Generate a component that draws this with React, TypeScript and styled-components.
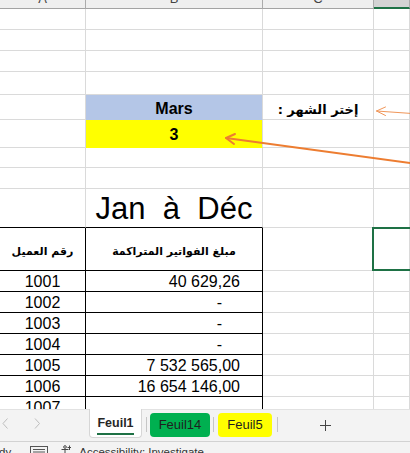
import React from 'react';
import styled, { createGlobalStyle } from 'styled-components';

const GRID = '#dadada';
const BLACK = '#000000';
const XL_GREEN = '#1e7145';
const ORANGE = '#ed7d31';

const GlobalStyle = createGlobalStyle`
  html, body { margin: 0; padding: 0; background: #ffffff; overflow: hidden; }
  body { font-family: "Liberation Sans", "DejaVu Sans", sans-serif; }
`;

const Window = styled.div`
  width: 410px;
  height: 453px;
  display: flex;
  flex-direction: column;
  overflow: hidden;
`;

const SheetArea = styled.div`
  position: relative;
  flex: none;
  height: 409px;
  overflow: hidden;
`;

const Grid = styled.div`
  display: grid;
  grid-template-columns: 86px 177px 111px 36px;
  grid-template-rows: 9px 21px 21px 21px 23px 25px 28px 20px 21px 39px 43px repeat(7, 21px);
`;

const HeaderCell = styled.div<{ $active?: boolean }>`
  box-sizing: border-box;
  display: flex;
  align-items: flex-end;
  justify-content: center;
  overflow: hidden;
  background: ${p => (p.$active ? '#d3d3d3' : '#efefef')};
  border-right: 1px solid #ababab;
  border-bottom: ${p => (p.$active ? `2px solid ${XL_GREEN}` : '1px solid #a3a3a3')};
`;

const ColumnLetter = styled.span`
  font-size: 13px;
  line-height: 13px;
  color: #444;
  margin-bottom: 3px;
`;

type Align = 'left' | 'center' | 'right';

const Cell = styled.div<{
  $fill?: string;
  $right?: string;
  $bottom?: string;
  $align?: Align;
  $pr?: number;
  $pb?: number;
  $pt?: number;
  $rtl?: boolean;
  $middle?: boolean;
}>`
  box-sizing: border-box;
  display: flex;
  align-items: ${p => (p.$middle ? 'center' : 'flex-end')};
  justify-content: ${p =>
    p.$align === 'right' ? 'flex-end' : p.$align === 'left' ? 'flex-start' : 'center'};
  background: ${p => p.$fill ?? '#ffffff'};
  border-right: 1px solid ${p => p.$right ?? GRID};
  border-bottom: 1px solid ${p => p.$bottom ?? p.$fill ?? GRID};
  padding-top: ${p => p.$pt ?? 0}px;
  padding-right: ${p => p.$pr ?? 0}px;
  padding-bottom: ${p => p.$pb ?? 0}px;
  direction: ${p => (p.$rtl ? 'rtl' : 'ltr')};
  white-space: pre;
  overflow: hidden;
`;

const CellText = styled.span<{ $size: number; $bold?: boolean; $arabic?: boolean }>`
  font-family: ${p =>
    p.$arabic ? '"DejaVu Sans", sans-serif' : '"Liberation Sans", Arial, sans-serif'};
  font-size: ${p => p.$size}px;
  font-weight: ${p => (p.$bold ? 700 : 400)};
  color: #000;
`;

const Overlay = styled.svg`
  position: absolute;
  left: 0;
  top: 0;
  pointer-events: none;
`;

const SelectionBox = styled.div`
  position: absolute;
  left: 372px;
  top: 227px;
  width: 60px;
  height: 44px;
  box-sizing: border-box;
  border: 2px solid ${XL_GREEN};
`;

const TabBar = styled.div`
  flex: none;
  box-sizing: border-box;
  height: 33px;
  display: flex;
  align-items: flex-start;
  background: #f3f3f3;
  border-top: 1px solid #e2e2e2;
  border-bottom: 1px solid #d2d2d2;
`;

const NavGroup = styled.div`
  flex: none;
  box-sizing: border-box;
  width: 89px;
  display: flex;
  gap: 25px;
  padding-left: 2px;
  margin-top: 8px;
`;

const ActiveTab = styled.div`
  flex: none;
  box-sizing: border-box;
  width: 53px;
  height: 29px;
  margin-top: -1px;
  display: flex;
  justify-content: center;
  padding-top: 7px;
  background: #ffffff;
  border: 1px solid #d6d6d6;
  border-top: none;
  border-radius: 0 0 4px 4px;
`;

const ActiveLabel = styled.span`
  display: inline-block;
  height: 14px;
  font-size: 12.5px;
  line-height: 14px;
  font-weight: 700;
  color: #262626;
  padding-bottom: 3px;
  border-bottom: 2px solid ${XL_GREEN};
`;

const ColorTab = styled.div<{ $color: string; $width: number }>`
  flex: none;
  width: ${p => p.$width}px;
  height: 24px;
  margin-top: 3px;
  border-radius: 4px;
  background: ${p => p.$color};
  font-size: 13px;
  line-height: 24px;
  text-align: center;
  color: #1f1f1f;
`;

const TabSeparator = styled.div<{ $ml: number; $mr: number }>`
  flex: none;
  width: 1px;
  height: 15px;
  margin: 7px ${p => p.$mr}px 0 ${p => p.$ml}px;
  background: #c6c6c6;
`;

const AddSheet = styled.div`
  flex: none;
  margin: 10px 0 0 42px;
  display: flex;
`;

const StatusBar = styled.div`
  flex: 1;
  display: flex;
  align-items: flex-start;
  background: #f3f3f3;
  font-size: 11.5px;
  color: #333;
  overflow: hidden;
  padding-top: 3px;
`;

const StatusText = styled.span<{ $ml: number }>`
  flex: none;
  margin-left: ${p => p.$ml}px;
  white-space: nowrap;
  line-height: 14px;
`;

const StatusIcon = styled.svg<{ $ml: number }>`
  flex: none;
  margin-left: ${p => p.$ml}px;
  margin-top: 0px;
`;

const Chevron = ({ dir }: { dir: 'left' | 'right' }) => (
  <svg width="7" height="11" viewBox="0 0 7 11">
    <path
      d={dir === 'left' ? 'M5.5 0.5 L1 5.5 L5.5 10.5' : 'M1 0.5 L5.5 5.5 L1 10.5'}
      fill="none"
      stroke="#bdbdbd"
      strokeWidth="1"
    />
  </svg>
);

const amounts = ['40 629,26', '-', '-', '-', '7 532 565,00', '16 654 146,00', ''];

const EmptyRow = () => (
  <>
    <Cell />
    <Cell />
    <Cell />
    <Cell />
  </>
);

export default function App() {
  return (
    <Window>
      <GlobalStyle />
      <SheetArea>
        <Grid>
          <HeaderCell><ColumnLetter>A</ColumnLetter></HeaderCell>
          <HeaderCell><ColumnLetter>B</ColumnLetter></HeaderCell>
          <HeaderCell><ColumnLetter>C</ColumnLetter></HeaderCell>
          <HeaderCell $active />

          <EmptyRow />
          <EmptyRow />
          <EmptyRow />
          <EmptyRow />

          <Cell />
          <Cell $fill="#b4c6e7" $right={GRID} $pb={1}>
            <CellText $size={16} $bold>Mars</CellText>
          </Cell>
          <Cell $rtl $pb={2}>
            <CellText $size={13} $bold $arabic>إختر الشهر :</CellText>
          </Cell>
          <Cell />

          <Cell />
          <Cell $fill="#ffff00" $right={GRID} $pb={3}>
            <CellText $size={16} $bold>3</CellText>
          </Cell>
          <Cell />
          <Cell />

          <EmptyRow />
          <EmptyRow />

          <Cell $bottom={BLACK} />
          <Cell $bottom={BLACK}>
            <CellText $size={31}>{'Jan  à  Déc'}</CellText>
          </Cell>
          <Cell />
          <Cell />

          <Cell $right={BLACK} $bottom={BLACK} $middle $rtl $pt={5}>
            <CellText $size={11} $bold $arabic>رقم العميل</CellText>
          </Cell>
          <Cell $right={BLACK} $bottom={BLACK} $middle $rtl $pt={5}>
            <CellText $size={11} $bold $arabic>مبلغ الفواتير المتراكمة</CellText>
          </Cell>
          <Cell />
          <Cell />

          {amounts.map((amount, i) => (
            <React.Fragment key={i}>
              <Cell $right={BLACK} $bottom={BLACK}>
                <CellText $size={16}>{String(1001 + i)}</CellText>
              </Cell>
              <Cell $right={BLACK} $bottom={BLACK} $align="right" $pr={amount === '-' ? 40 : 22}>
                <CellText $size={16}>{amount}</CellText>
              </Cell>
              <Cell />
              <Cell />
            </React.Fragment>
          ))}
        </Grid>

        <SelectionBox />

        <Overlay width="410" height="409" viewBox="0 0 410 409">
          <g fill="none" stroke={ORANGE} strokeLinecap="round" strokeLinejoin="round">
            <g strokeWidth="1" opacity="0.8">
              <path d="M376.5 111 L412 113.5" />
              <path d="M385.5 107 L376.5 111 L385.5 115.5" />
            </g>
            <g strokeWidth="2">
              <path d="M226 138 L414 163.5" />
              <path d="M235 134 L226 138 L234 144" />
            </g>
          </g>
        </Overlay>
      </SheetArea>

      <TabBar>
        <NavGroup>
          <Chevron dir="left" />
          <Chevron dir="right" />
        </NavGroup>
        <ActiveTab>
          <ActiveLabel>Feuil1</ActiveLabel>
        </ActiveTab>
        <TabSeparator $ml={4} $mr={3} />
        <ColorTab $color="#00b050" $width={60}>Feuil14</ColorTab>
        <TabSeparator $ml={3} $mr={4} />
        <ColorTab $color="#ffff00" $width={54}>Feuil5</ColorTab>
        <TabSeparator $ml={5} $mr={0} />
        <AddSheet>
          <svg width="11" height="11" viewBox="0 0 11 11">
            <path d="M5.5 0 V11 M0 5.5 H11" stroke="#444" strokeWidth="1" />
          </svg>
        </AddSheet>
      </TabBar>

      <StatusBar>
        <StatusText $ml={-22}>Ready</StatusText>
        <StatusIcon $ml={19} width="18" height="12" viewBox="0 0 18 12">
          <rect x="0.5" y="1.5" width="17" height="12" fill="none" stroke="#555" />
          <path d="M3 4.5 H15 M3 7 H15" stroke="#555" />
        </StatusIcon>
        <StatusIcon $ml={13} width="10" height="12" viewBox="0 0 10 12">
          <circle cx="4" cy="2" r="1.3" fill="none" stroke="#444" />
          <path d="M0.5 4.5 H7.5 M4 4.5 V12 M8.5 0.5 V5 M6.5 2.5 H10" stroke="#444" fill="none" />
        </StatusIcon>
        <StatusText $ml={8}>Accessibility: Investigate</StatusText>
      </StatusBar>
    </Window>
  );
}
